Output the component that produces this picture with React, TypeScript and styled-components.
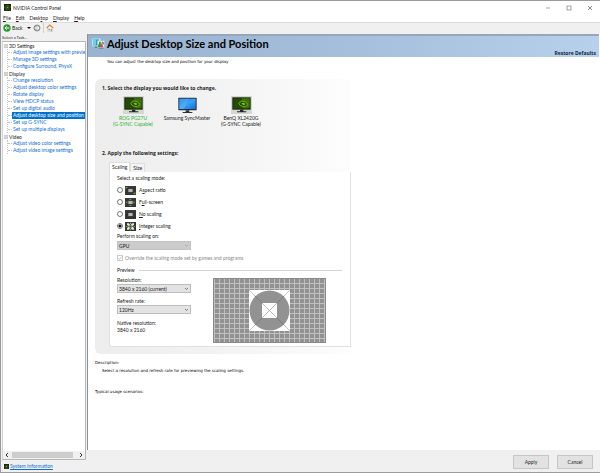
import React, { useState } from "react";
import styled, { createGlobalStyle } from "styled-components";

const GlobalStyle = createGlobalStyle`
  * { box-sizing: border-box; }
  body { margin: 0; background: #fff; }
  body, button, input, select {
    font-family: Lato, "Liberation Sans", sans-serif;
    font-size: 5px;
    line-height: 6px;
    color: #222;
  }
`;

const Window = styled.div`
  display: flex;
  flex-direction: column;
  min-height: 100vh;
  border: solid #9a9ca0;
  border-width: 1px 0 1px 1px;
  background: #fff;
`;

const TitleBar = styled.header`
  display: flex;
  align-items: center;
  gap: 2px;
  height: 13px;
  padding: 0 7px 0 3px;
`;

const WindowTitle = styled.h1`
  flex: 1;
  margin: 0;
  font-size: 5px;
  font-weight: 400;
`;

const CaptionButton = styled.button`
  display: flex;
  margin-left: 12px;
  padding: 0;
  border: 0;
  background: none;
`;

const MenuBar = styled.nav`
  display: flex;
  align-items: center;
  gap: 5px;
  height: 8px;
  padding: 0 2px;
`;

const MenuButton = styled.button`
  padding: 0;
  border: 0;
  background: none;
`;

const Mnemonic = styled.u`
  text-underline-offset: 1px;
`;

const Toolbar = styled.div`
  display: flex;
  align-items: center;
  gap: 2px;
  height: 12px;
  padding: 0 2px 1px;
  border-top: 1px solid #dcdcdc;
  background: #f0f0f0;
`;

const ToolButton = styled.button`
  display: flex;
  align-items: center;
  gap: 1px;
  padding: 0;
  border: 0;
  background: none;
`;

const Divider = styled.span`
  width: 1px;
  height: 10px;
  background: #cfcfcf;
`;

const Body = styled.div`
  display: grid;
  grid-template-columns: 86px minmax(0, 1fr);
  flex: 1;
`;

const Sidebar = styled.aside`
  display: flex;
  flex-direction: column;
  min-width: 0;
  padding-left: 1px;
  background: #f0f0f0;
`;

const SidebarCaption = styled.div`
  height: 7px;
  padding-top: 1px;
  font-size: 4px;
`;

const TreeBox = styled.div`
  display: flex;
  flex: 1;
  flex-direction: column;
  margin-right: 1px;
  border: 1px solid #b4b8bc;
  border-left-color: #d4d4d4;
  background: #fff;
`;

const Tree = styled.ul`
  flex: 1;
  margin: 0;
  padding: 0 0 0 1px;
  overflow: hidden;
  list-style: none;
`;

const GroupTitle = styled.div`
  display: flex;
  align-items: center;
  gap: 1px;
  height: 7px;
`;

const Branch = styled.ul`
  margin: 0 0 0 3px;
  padding: 0;
  border-left: 1px dotted #c4c4c4;
  list-style: none;
`;

const BranchItem = styled.li`
  display: flex;
  align-items: center;
  height: 7px;
  white-space: nowrap;

  &::before {
    flex: none;
    width: 4px;
    border-top: 1px dotted #c4c4c4;
    content: "";
  }
`;

const TaskLink = styled.a<{ $selected?: boolean }>`
  flex: none;
  padding: 0 1px;
  line-height: 7px;
  color: ${(p) => (p.$selected ? "#fff" : "#0f6fcf")};
  background: ${(p) => (p.$selected ? "#0070cc" : "none")};
  text-decoration: none;
`;

const ScrollBar = styled.div`
  display: flex;
  align-items: center;
  gap: 2px;
  height: 8px;
  padding: 0 2px;
  background: #f0f0f0;
`;

const ScrollThumb = styled.div`
  flex: 1;
  height: 6px;
  margin-right: 3px;
  background: #cdcdcd;
`;

const ScrollArrow = styled.button`
  display: flex;
  padding: 0;
  border: 0;
  background: none;
`;

const SystemInfo = styled.div`
  display: flex;
  align-items: center;
  gap: 1px;
  height: 12px;
  padding-left: 2px;

  a { color: #0f6fcf; }
`;

const Main = styled.main`
  display: flex;
  flex-direction: column;
  min-width: 0;
`;

const Page = styled.div`
  display: flex;
  flex: 1;
  flex-direction: column;
  margin-right: 1px;
  border-left: 1px solid #8e9297;
`;

const Banner = styled.div`
  display: flex;
  align-items: center;
  justify-content: space-between;
  height: 23px;
  padding: 0 3px 0 4px;
  border-top: 2px solid #96a7ba;
  background: linear-gradient(90deg, #98b2d0, #a4bedb 50%, #b7d1ec);
`;

const BannerTitle = styled.h2`
  display: flex;
  align-items: center;
  gap: 2px;
  margin: 0 0 5px;
  font-size: 11px;
  font-weight: 700;
  line-height: 12px;
  color: #000;
`;

const RestoreButton = styled.button`
  align-self: flex-end;
  margin-bottom: 1px;
  padding: 0;
  border: 0;
  background: none;
  font-family: "Open Sans", sans-serif;
  font-weight: 700;
  color: #12263c;
`;

const Content = styled.div`
  padding: 2px 8px 12px 7px;
`;

const Note = styled.p<{ $indent?: number }>`
  margin: 0 0 0 ${(p) => p.$indent ?? 0}px;
  font-family: "DejaVu Sans", sans-serif;
  font-size: 4px;
  color: #000;
`;

const Panel = styled.section`
  max-width: 256px;
  margin: 14px 0 6px;
  padding: 6px 0 7px 7px;
  border-radius: 6px;
  background: linear-gradient(90deg, #ededed, #f3f3f3 50%, #fdfdfd);
`;

const StepTitle = styled.h3`
  margin: 0;
  font-family: "Open Sans", sans-serif;
  font-size: 5px;
  font-weight: 700;
  line-height: 6px;
`;

const Displays = styled.div`
  display: flex;
  gap: 8px;
  min-height: 54px;
  margin: 5px 0 0 8px;
`;

const DisplayButton = styled.button<{ $active?: boolean }>`
  display: flex;
  flex-direction: column;
  align-items: center;
  align-self: flex-start;
  width: 46px;
  padding: 0;
  border: 0;
  background: none;
  white-space: nowrap;
  color: ${(p) => (p.$active ? "#2fb02f" : "#222")};
`;

const Thumb = styled.span<{ $framed?: boolean }>`
  display: flex;
  align-items: center;
  justify-content: center;
  width: 21px;
  height: 18px;
  margin-bottom: 1px;
  background: ${(p) => (p.$framed ? "#d2d9d0" : "none")};
`;

const Tabs = styled.div`
  display: flex;
  align-items: flex-end;
  height: 10px;
  margin: 6px 0 0 7px;
`;

const Tab = styled.button<{ $active?: boolean }>`
  height: ${(p) => (p.$active ? 10 : 9)}px;
  padding: 0 2px 1px;
  border: 1px solid #dedede;
  border-bottom: 0;
  background: ${(p) => (p.$active ? "#fff" : "#f3f3f3")};
`;

const TabPage = styled.div`
  margin-left: 7px;
  padding: 2px 24px 3px 7px;
  border: 1px solid #e0e0e0;
  border-top: 0;
  background: #fff;
`;

const FieldLabel = styled.label`
  display: block;
  height: 8px;
  line-height: 8px;
`;

const Fieldset = styled.fieldset`
  min-width: 0;
  margin: 0;
  padding: 0;
  border: 0;

  legend { padding: 0 0 2px; line-height: 8px; }
`;

const RadioRow = styled.label`
  display: flex;
  align-items: center;
  height: 12px;
`;

const Radio = styled.input`
  width: 6px;
  height: 6px;
  margin: 0 2px 0 0;
  border: 1px solid #777;
  border-radius: 50%;
  background: #fff;
  appearance: none;

  &:checked { background: radial-gradient(circle, #111 0 1px, #fff 2px); }
`;

const ModeIcon = styled.svg`
  width: 11px;
  height: 9px;
  margin-right: 3px;
`;

const SelectBox = styled.span`
  display: grid;
  align-items: center;
  width: 74px;

  > * { grid-area: 1 / 1; }
  svg { justify-self: end; margin-right: 2px; pointer-events: none; }
`;

const Select = styled.select<{ $dim?: boolean }>`
  width: 100%;
  height: 9px;
  padding: 0 1px;
  border: 1px solid ${(p) => (p.$dim ? "#c2c2c2" : "#bdbdbd")};
  border-radius: 0;
  background: ${(p) => (p.$dim ? "#cccccc" : "#e3e3e3")};
  appearance: none;
`;

const CheckRow = styled.label`
  display: flex;
  align-items: center;
  gap: 2px;
  height: 16px;
  color: #8a8a8a;
`;

const CheckBoxHolder = styled.span`
  display: grid;

  > * { grid-area: 1 / 1; }
  svg { pointer-events: none; }
`;

const Checkbox = styled.input`
  width: 6px;
  height: 6px;
  margin: 0;
  border: 1px solid #ccc;
  background: #fff;
  appearance: none;
`;

const SectionRule = styled.div`
  display: flex;
  align-items: center;
  gap: 4px;
  height: 8px;
  margin-right: -16px;

  &::after {
    flex: 1;
    border-top: 1px solid #d4d4d4;
    content: "";
  }
`;

const PreviewRow = styled.div`
  display: flex;
  justify-content: space-between;
  margin-top: 2px;
`;

const PreviewFields = styled.div`
  display: flex;
  flex-direction: column;
`;

const Spacer = styled.div<{ $size: number }>`
  height: ${(p) => p.$size}px;
`;

const PreviewArt = styled.svg`
  width: 113px;
  height: 65px;
  margin-top: 2px;
`;

const Footer = styled.footer`
  display: flex;
  justify-content: flex-end;
  gap: 8px;
  padding: 5px 7px 3px;
  background: #f0f0f0;
`;

const PushButton = styled.button`
  width: 36px;
  height: 14px;
  padding: 0;
  border: 1px solid #c6c6c6;
  background: #e2e2e2;
`;

const NvidiaMark = ({ size }: { size: number }) => (
  <svg width={size} height={size} viewBox="0 0 14 14" aria-hidden="true">
    <rect width="14" height="14" fill="#17200f" />
    <path d="M1 6Q4 2 8 3Q12 4 13 6Q10 11 6 10Q2 9 1 6Z" fill="none" stroke="#4d7d16" strokeWidth="1.4" />
    <path d="M4 6Q7 4 10 6Q8 9 6 8Z" fill="#76a928" />
    <path d="M1 12H13" stroke="#5f7050" />
  </svg>
);

const NvidiaScreen = () => (
  <svg width="19" height="16" viewBox="0 0 57 48" aria-hidden="true">
    <rect x="1" y="1" width="55" height="37" fill="#17230e" />
    <rect x="4" y="4" width="49" height="31" fill="#234a06" />
    <path d="M30 4H53V31Q47 35 37 34Q29 32 26 26Q36 32 45 25Q42 16 33 13Q24 13 19 20Q20 12 30 9Z" fill="#3b7208" />
    <path d="M20 19Q29 8 40 14L48 22Q42 31 32 28Q23 27 20 19Z" fill="none" stroke="#79b81a" strokeWidth="2.5" />
    <path d="M28 19Q35 14 40 21Q36 27 31 22Z" fill="#85c41c" />
    <path d="M24 38H34V43H43V46H15V43H24Z" fill="#20271d" />
  </svg>
);

const BlueScreen = () => (
  <svg width="19" height="17" viewBox="0 0 57 51" aria-hidden="true">
    <defs>
      <linearGradient id="screen" x1="0" y1="0" x2="1" y2="1">
        <stop offset="0" stopColor="#1674dd" />
        <stop offset="0.5" stopColor="#36a3f7" />
        <stop offset="1" stopColor="#176bd0" />
      </linearGradient>
    </defs>
    <rect x="1" y="2" width="55" height="38" rx="2" fill="#27313d" />
    <rect x="4" y="5" width="49" height="31" fill="url(#screen)" />
    <path d="M4 5H34L17 36H4Z" fill="#73c5ff" opacity="0.35" />
    <path d="M23 40H34V45H43V48H14V45H23Z" fill="#293542" />
  </svg>
);

const BannerIcon = () => (
  <svg width="13" height="12" viewBox="0 0 39 36" aria-hidden="true">
    <rect x="1" y="2" width="24" height="23" fill="#d8f2fb" />
    <rect x="3" y="4" width="18" height="19" fill="#2ba4cf" />
    <path d="M3 4H12V23H3Z" fill="#68d4e3" />
    <path d="M8 26H17V30H8Z" fill="#59838f" />
    <rect x="16" y="7" width="22" height="22" fill="#eef6f2" stroke="#5c92ac" />
    <path d="M18 25L22 11H27V27H18Z" fill="#2d8e56" />
    <path d="M26 12H30V21H26Z" fill="#f0cb32" />
    <path d="M25 19L31 17L34 27H25Z" fill="#e64c30" />
    <path d="M31 10L35 13V20L31 17Z" fill="#3c63bd" />
    <path d="M20 29H34V32H20Z" fill="#5d8190" />
  </svg>
);

const Chevron = ({ color = "#555" }: { color?: string }) => (
  <svg width="5" height="4" viewBox="0 0 10 8" aria-hidden="true">
    <path d="M2 2L5 5L8 2" fill="none" stroke={color} strokeWidth="1.4" />
  </svg>
);

const Minus = () => (
  <svg width="4" height="4" viewBox="0 0 12 12" aria-hidden="true">
    <rect x="1" y="1" width="10" height="10" fill="#fff" stroke="#bbb" strokeWidth="2" />
    <path d="M3 6H9" stroke="#555" strokeWidth="1.5" />
  </svg>
);

type Mode = "aspect" | "full" | "none" | "integer";

const ModeArt = ({ mode }: { mode: Mode }) => (
  <ModeIcon viewBox="0 0 33 27" aria-hidden="true">
    <rect width="33" height="27" fill="#343434" />
    <path d="M1 26V1H32" fill="none" stroke="#555" />
    {mode !== "integer" && <rect x="10" y="9" width="13" height="9" fill="#b9bcb9" stroke="#777" />}
    {mode === "aspect" && <path d="M2 9V3H9ZM31 18V24H24Z" fill="#6db32b" />}
    {mode === "full" && (
      <path d="M16 2L20 6H12ZM16 25L20 21H12ZM3 13L7 9V17ZM30 13L26 9V17Z" fill="#6db32b" />
    )}
    {mode === "integer" && (
      <>
        <path d="M6 4H12L16 10L21 4H27V9L21 13L27 18V23H21L16 17L12 23H6V18L12 13L6 9Z" fill="#dce7d4" />
        <path d="M13 10H20V17H13Z" fill="#3f4c36" />
        <path d="M15 2H18V6H15ZM15 21H18V25H15ZM3 12H7V15H3ZM26 12H30V15H26Z" fill="#72b435" />
      </>
    )}
  </ModeIcon>
);

const groups = [
  { title: "3D Settings", items: ["Adjust image settings with preview", "Manage 3D settings", "Configure Surround, PhysX"] },
  {
    title: "Display",
    items: [
      "Change resolution",
      "Adjust desktop color settings",
      "Rotate display",
      "View HDCP status",
      "Set up digital audio",
      "Adjust desktop size and position",
      "Set up G-SYNC",
      "Set up multiple displays",
    ],
  },
  { title: "Video", items: ["Adjust video color settings", "Adjust video image settings"] },
];

const modes: { id: Mode; before: string; key: string; after: string }[] = [
  { id: "aspect", before: "A", key: "s", after: "pect ratio" },
  { id: "full", before: "F", key: "u", after: "ll-screen" },
  { id: "none", before: "", key: "N", after: "o scaling" },
  { id: "integer", before: "", key: "I", after: "nteger scaling" },
];

const PreviewPicture = () => (
  <PreviewArt viewBox="0 0 113 65" role="img" aria-label="Scaling preview">
    <defs>
      <pattern id="grid" x="1" y="0" width="5" height="5" patternUnits="userSpaceOnUse">
        <path d="M0 0.5H5M0.5 0V5" stroke="#c0c0c0" />
      </pattern>
    </defs>
    <rect width="113" height="65" fill="#929292" />
    <rect width="113" height="65" fill="url(#grid)" />
    <rect x="0.5" y="0.5" width="112" height="64" fill="none" stroke="#8a8a8a" />
    <rect x="36" y="12" width="41" height="41" fill="#fff" />
    <path d="M36 12L77 53M77 12L36 53" stroke="#aaa" strokeWidth="0.7" />
    <circle cx="56.5" cy="32.5" r="20" fill="#929292" />
    <path d="M42 18L71 47M71 18L42 47" stroke="#747474" strokeWidth="0.7" />
    <rect x="49" y="25" width="15" height="15" fill="#fff" />
    <path d="M49 25L64 40M64 25L49 40" stroke="#999" strokeWidth="0.7" />
  </PreviewArt>
);

export default function App() {
  const [mode, setMode] = useState<Mode>("integer");
  const [override, setOverride] = useState(true);

  return (
    <Window>
      <GlobalStyle />
      <TitleBar>
        <NvidiaMark size={7} />
        <WindowTitle>NVIDIA Control Panel</WindowTitle>
        <CaptionButton aria-label="Minimize">
          <svg width="6" height="6" viewBox="0 0 6 6"><path d="M1 3H5" stroke="#666" strokeWidth="0.6" /></svg>
        </CaptionButton>
        <CaptionButton aria-label="Maximize">
          <svg width="8" height="6" viewBox="0 0 8 6"><rect x="2" y="1" width="4" height="4" fill="none" stroke="#666" strokeWidth="0.6" /></svg>
        </CaptionButton>
        <CaptionButton aria-label="Close">
          <svg width="6" height="6" viewBox="0 0 6 6"><path d="M1 1L5 5M5 1L1 5" stroke="#555" strokeWidth="0.7" /></svg>
        </CaptionButton>
      </TitleBar>
      <MenuBar>
        {["File", "Edit", "Desktop", "Display", "Help"].map((name) => {
          const at = name === "Desktop" ? 4 : 0;
          return (
            <MenuButton key={name}>
              {name.slice(0, at)}<Mnemonic>{name[at]}</Mnemonic>{name.slice(at + 1)}
            </MenuButton>
          );
        })}
      </MenuBar>
      <Toolbar>
        <ToolButton>
          <svg width="8" height="8" viewBox="0 0 24 24" aria-hidden="true">
            <circle cx="12" cy="12" r="11" fill="#2c962f" />
            <path d="M19 12H6M11 7L6 12L11 17" fill="none" stroke="#fff" strokeWidth="3" />
          </svg>
          Back
        </ToolButton>
        <ToolButton aria-label="Recent pages">
          <svg width="6" height="4" viewBox="0 0 6 4"><path d="M2 1H6L4 3Z" fill="#111" /></svg>
        </ToolButton>
        <ToolButton aria-label="Forward">
          <svg width="8" height="8" viewBox="0 0 24 24">
            <circle cx="12" cy="12" r="9" fill="#b8b8b8" stroke="#8a8a8a" strokeWidth="3" />
            <path d="M6 12H17M13 7L18 12L13 17" fill="none" stroke="#fff" strokeWidth="3" />
          </svg>
        </ToolButton>
        <Divider />
        <ToolButton aria-label="Home">
          <svg width="8" height="8" viewBox="0 0 24 24">
            <path d="M5 11V22H20V11L12 5Z" fill="#fbfaf5" stroke="#9aa7b4" />
            <path d="M2 12L11 3L22 12" fill="none" stroke="#de8a35" strokeWidth="3.5" />
            <path d="M14 14H18V22H14Z" fill="#d98c43" />
            <path d="M7 14H12V19H7Z" fill="#6aa2dc" />
          </svg>
        </ToolButton>
      </Toolbar>
      <Body>
        <Sidebar>
          <SidebarCaption>Select a Task...</SidebarCaption>
          <TreeBox>
            <Tree>
              {groups.map((group) => (
                <li key={group.title}>
                  <GroupTitle><Minus />{group.title}</GroupTitle>
                  <Branch>
                    {group.items.map((item) => (
                      <BranchItem key={item}>
                        <TaskLink href="#" $selected={item === "Adjust desktop size and position"}>{item}</TaskLink>
                      </BranchItem>
                    ))}
                  </Branch>
                </li>
              ))}
            </Tree>
            <ScrollBar>
              <ScrollArrow aria-label="Scroll left">
                <svg width="5" height="6" viewBox="0 0 5 6"><path d="M3 1L1 3L3 5" fill="none" stroke="#333" /></svg>
              </ScrollArrow>
              <ScrollThumb />
              <ScrollArrow aria-label="Scroll right">
                <svg width="5" height="6" viewBox="0 0 5 6"><path d="M2 1L4 3L2 5" fill="none" stroke="#333" /></svg>
              </ScrollArrow>
            </ScrollBar>
          </TreeBox>
          <SystemInfo>
            <NvidiaMark size={5} />
            <a href="#">System Information</a>
          </SystemInfo>
        </Sidebar>
        <Main>
          <Page>
            <Banner>
              <BannerTitle><BannerIcon />Adjust Desktop Size and Position</BannerTitle>
              <RestoreButton>Restore Defaults</RestoreButton>
            </Banner>
            <Content>
              <Note $indent={12}>You can adjust the desktop size and position for your display</Note>
              <Panel>
                <StepTitle>1. Select the display you would like to change.</StepTitle>
                <Displays>
                  <DisplayButton $active>
                    <Thumb $framed><NvidiaScreen /></Thumb>
                    ROG PG27U<br />(G-SYNC Capable)
                  </DisplayButton>
                  <DisplayButton>
                    <Thumb><BlueScreen /></Thumb>
                    Samsung SyncMaster
                  </DisplayButton>
                  <DisplayButton>
                    <Thumb $framed><NvidiaScreen /></Thumb>
                    BenQ XL2420G<br />(G-SYNC Capable)
                  </DisplayButton>
                </Displays>
                <StepTitle>2. Apply the following settings:</StepTitle>
                <Tabs role="tablist">
                  <Tab role="tab" aria-selected="true" $active>Scaling</Tab>
                  <Tab role="tab" aria-selected="false">Size</Tab>
                </Tabs>
                <TabPage>
                  <Fieldset>
                    <legend>Select a scaling mode:</legend>
                    {modes.map((m) => (
                      <RadioRow key={m.id}>
                        <Radio type="radio" name="mode" checked={mode === m.id} onChange={() => setMode(m.id)} />
                        <ModeArt mode={m.id} />
                        <span>{m.before}<Mnemonic>{m.key}</Mnemonic>{m.after}</span>
                      </RadioRow>
                    ))}
                  </Fieldset>
                  <FieldLabel htmlFor="device">Perform scaling on:</FieldLabel>
                  <Spacer $size={1} />
                  <SelectBox>
                    <Select id="device" $dim><option>GPU</option></Select>
                    <Chevron color="#999" />
                  </SelectBox>
                  <CheckRow>
                    <CheckBoxHolder>
                      <Checkbox type="checkbox" checked={override} onChange={(e) => setOverride(e.target.checked)} />
                      {override && (
                        <svg width="6" height="6" viewBox="0 0 6 6" aria-hidden="true">
                          <path d="M1 3L2.5 4.5L5 1.5" fill="none" stroke="#aaa" strokeWidth="0.7" />
                        </svg>
                      )}
                    </CheckBoxHolder>
                    Override the scaling mode set by games and programs
                  </CheckRow>
                  <SectionRule>Preview</SectionRule>
                  <PreviewRow>
                    <PreviewFields>
                      <FieldLabel htmlFor="resolution">Resolution:</FieldLabel>
                      <SelectBox>
                        <Select id="resolution"><option>3840 x 2160 (current)</option></Select>
                        <Chevron />
                      </SelectBox>
                      <Spacer $size={4} />
                      <FieldLabel htmlFor="refresh">Refresh rate:</FieldLabel>
                      <SelectBox>
                        <Select id="refresh"><option>120Hz</option></Select>
                        <Chevron />
                      </SelectBox>
                      <Spacer $size={5} />
                      <FieldLabel as="span">Native resolution:</FieldLabel>
                      <span>3840 x 2160</span>
                    </PreviewFields>
                    <PreviewPicture />
                  </PreviewRow>
                </TabPage>
              </Panel>
              <Note>Description:</Note>
              <Spacer $size={2} />
              <Note $indent={7}>Select a resolution and refresh rate for previewing the scaling settings.</Note>
              <Spacer $size={15} />
              <Note>Typical usage scenarios:</Note>
            </Content>
          </Page>
          <Footer>
            <PushButton>Apply</PushButton>
            <PushButton>Cancel</PushButton>
          </Footer>
        </Main>
      </Body>
    </Window>
  );
}
